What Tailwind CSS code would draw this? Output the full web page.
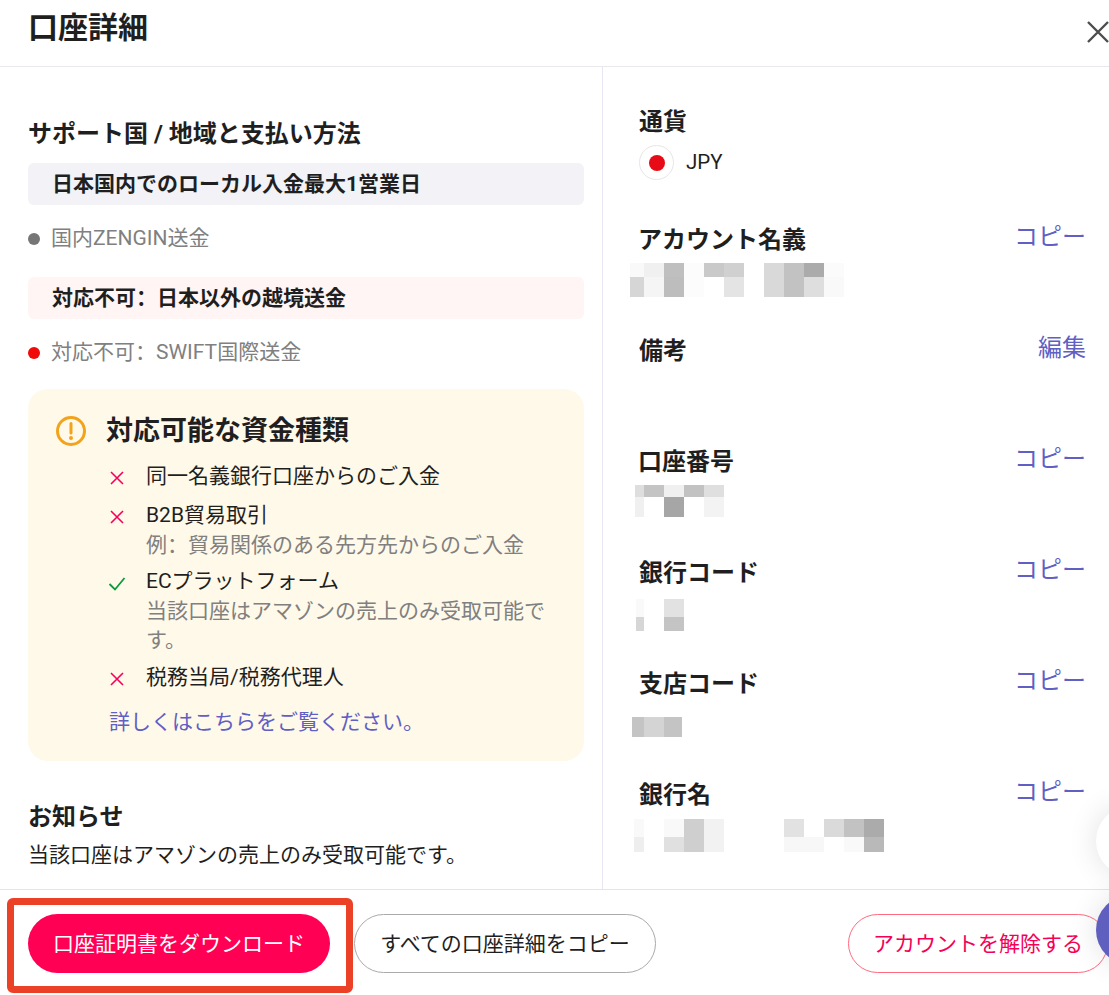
<!DOCTYPE html>
<html lang="ja">
<head>
    <meta charset="UTF-8">
    <meta name="viewport" content="width=device-width, initial-scale=1.0">
    <title>口座詳細</title>
    <script src="https://cdn.jsdelivr.net/npm/@tailwindcss/browser@4"></script>
</head>
<body class="bg-white text-[#1f1f1f] font-['Roboto','Noto_Sans_CJK_JP',sans-serif] text-[21px]">

    <div class="relative w-[1109px] h-[995px] overflow-hidden flex flex-col">

        <!-- ヘッダー -->
        <div class="relative h-[67px] shrink-0 border-b border-[#e8e8ee] pl-[28px]">
            <h1 class="text-[30px] leading-[56px] font-bold">口座詳細</h1>
            <svg class="absolute left-[1086px] top-[20px] w-[24px] h-[24px]" viewBox="0 0 24 24" fill="none" stroke="#4d4d4d" stroke-width="2.4"><path d="M2 2 L22 22 M22 2 L2 22"/></svg>
        </div>

        <div class="flex h-[822px] shrink-0 overflow-hidden">

            <!-- 左カラム -->
            <div class="w-[603px] shrink-0 border-r border-[#e6e6f5] pl-[28px] pr-[18px] pt-[50px]">
                <h2 class="text-[24px] leading-[34px] font-bold">サポート国 / 地域と支払い方法</h2>

                <div class="mt-[12px] h-[42px] rounded-md bg-[#f2f2f7] pl-[24px] leading-[42px] font-bold">日本国内でのローカル入金最大1営業日</div>
                <div class="mt-[19px] h-[30px] flex items-center text-[#808080]">
                    <span class="w-[12px] h-[12px] rounded-full bg-[#767676] mr-[12px]"></span>
                    <span class="-ml-px">国内ZENGIN送金</span>
                </div>

                <div class="mt-[23px] h-[42px] rounded-md bg-[#fff5f5] pl-[24px] leading-[42px] font-bold">対応不可<span lang="zh-CN">：</span>日本以外の越境送金</div>
                <div class="mt-[19px] h-[30px] flex items-center text-[#808080]">
                    <span class="w-[12px] h-[12px] rounded-full bg-[#f00a0a] mr-[12px]"></span>
                    <span class="-ml-px">対応不可<span lang="zh-CN">：</span>SWIFT国際送金</span>
                </div>

                <div class="mt-[21px] h-[372px] rounded-[20px] bg-[#fff9e9] pt-[22px] pl-[28px]">
                    <div class="flex items-center h-[40px]">
                        <svg class="w-[30px] h-[32px] mr-[20px]" viewBox="0 0 30 32" fill="none"><circle cx="15" cy="16" r="13.5" stroke="#f2a31b" stroke-width="3"/><path d="M15 8.5 V18" stroke="#f2a31b" stroke-width="3" stroke-linecap="round"/><circle cx="15" cy="23" r="2" fill="#f2a31b"/></svg>
                        <h3 class="text-[27px] leading-[40px] font-bold">対応可能な資金種類</h3>
                    </div>

                    <ul class="mt-[11px] leading-[29.5px]">
                        <li class="flex">
                            <svg class="w-[16px] h-[30px] ml-[53px] mr-[21px] shrink-0" viewBox="0 0 16 30" fill="none" stroke="#f5005a" stroke-width="1.6"><path d="M2 10 L14 22 M14 10 L2 22"/></svg>
                            <span>同一名義銀行口座からのご入金</span>
                        </li>
                        <li class="flex mt-[9px]">
                            <svg class="w-[16px] h-[30px] ml-[53px] mr-[21px] shrink-0" viewBox="0 0 16 30" fill="none" stroke="#f5005a" stroke-width="1.6"><path d="M2 10 L14 22 M14 10 L2 22"/></svg>
                            <div>
                                <div>B2B貿易取引</div>
                                <div class="text-[#808080]">例<span lang="zh-CN">：</span>貿易関係のある先方先からのご入金</div>
                            </div>
                        </li>
                        <li class="flex mt-[7px]">
                            <svg class="w-[18px] h-[30px] ml-[52px] mr-[20px] shrink-0" viewBox="0 0 18 30" fill="none" stroke="#0a9b3c" stroke-width="1.8"><path d="M1.5 17 L7 22.5 L16.5 11"/></svg>
                            <div class="w-[410px]">
                                <div>ECプラットフォーム</div>
                                <div class="text-[#808080]">当該口座はアマゾンの売上のみ受取可能です。</div>
                            </div>
                        </li>
                        <li class="flex mt-[7px]">
                            <svg class="w-[16px] h-[30px] ml-[53px] mr-[21px] shrink-0" viewBox="0 0 16 30" fill="none" stroke="#f5005a" stroke-width="1.6"><path d="M2 10 L14 22 M14 10 L2 22"/></svg>
                            <span>税務当局/税務代理人</span>
                        </li>
                    </ul>
                    <a class="block mt-[14px] ml-[53px] leading-[30px] text-[#5f5fc4]">詳しくはこちらをご覧ください。</a>
                </div>

                <h2 class="mt-[39px] text-[24px] leading-[34px] font-bold">お知らせ</h2>
                <p class="mt-[6px] leading-[30px]">当該口座はアマゾンの売上のみ受取可能です。</p>
            </div>

            <!-- 右カラム -->
            <div class="flex-1 pl-[36px] pr-[23px] pt-[38px]">
                <h2 class="text-[24px] leading-[34px] font-bold">通貨</h2>
                <div class="mt-[6px] h-[35px] flex items-center">
                    <span class="w-[35px] h-[35px] rounded-full border border-[#e6e6e6] flex items-center justify-center mr-[12px]">
                        <span class="w-[16px] h-[16px] rounded-full bg-[#e60b17]"></span>
                    </span>
                    <span class="text-[20.5px]">JPY</span>
                </div>

                <div class="mt-[43px] flex justify-between items-center h-[34px]">
                    <h2 class="text-[24px] leading-[34px] font-bold -ml-px">アカウント名義</h2>
                    <a class="text-[24px] leading-[34px] text-[#5f5fc4] mb-[6px]">コピー</a>
                </div>
                <svg class="mt-[6px] -ml-[9px] block" width="220" height="34" viewBox="630 263 220 34">
                    <rect x="630" y="263" width="14" height="14" fill="#f9f9f9"/><rect x="644" y="263" width="20" height="14" fill="#f0f0f0"/><rect x="664" y="263" width="20" height="14" fill="#bfbfbf"/><rect x="684" y="263" width="20" height="14" fill="#fcfcfc"/><rect x="704" y="263" width="20" height="14" fill="#c9c9c9"/><rect x="724" y="263" width="20" height="14" fill="#d0d0d0"/>
                    <rect x="764" y="263" width="20" height="14" fill="#d9d9d9"/><rect x="784" y="263" width="20" height="14" fill="#c2c2c2"/><rect x="804" y="263" width="20" height="14" fill="#ababab"/><rect x="824" y="263" width="20" height="14" fill="#fbfbfb"/>
                    <rect x="630" y="277" width="14" height="20" fill="#d6d6d6"/><rect x="644" y="277" width="20" height="20" fill="#f5f5f5"/><rect x="664" y="277" width="20" height="20" fill="#bdbdbd"/><rect x="684" y="277" width="20" height="20" fill="#fcfcfc"/><rect x="724" y="277" width="20" height="20" fill="#e4e4e4"/>
                    <rect x="764" y="277" width="20" height="20" fill="#d9d9d9"/><rect x="784" y="277" width="20" height="20" fill="#c2c2c2"/><rect x="804" y="277" width="20" height="20" fill="#dedede"/><rect x="824" y="277" width="20" height="20" fill="#f9f9f9"/>
                </svg>

                <div class="mt-[37px] flex justify-between items-center h-[34px]">
                    <h2 class="text-[24px] leading-[34px] font-bold">備考</h2>
                    <a class="text-[24px] leading-[34px] text-[#5f5fc4] mb-[6px]">編集</a>
                </div>

                <div class="mt-[77px] flex justify-between items-center h-[34px]">
                    <h2 class="text-[24px] leading-[34px] font-bold -ml-px">口座番号</h2>
                    <a class="text-[24px] leading-[34px] text-[#5f5fc4] mb-[6px]">コピー</a>
                </div>
                <svg class="mt-[6px] -ml-[4px] block" width="90" height="32" viewBox="635 485 90 32">
                    <rect x="635" y="485" width="9" height="12" fill="#dedede"/><rect x="644" y="485" width="20" height="12" fill="#c4c4c4"/><rect x="664" y="485" width="20" height="12" fill="#f0f0f0"/><rect x="684" y="485" width="20" height="12" fill="#c2c2c2"/><rect x="704" y="485" width="20" height="12" fill="#dfdfdf"/>
                    <rect x="635" y="497" width="9" height="20" fill="#f0f0f0"/><rect x="664" y="497" width="20" height="20" fill="#a6a6a6"/><rect x="704" y="497" width="20" height="20" fill="#f3f3f3"/>
                </svg>

                <div class="mt-[39px] flex justify-between items-center h-[34px]">
                    <h2 class="text-[24px] leading-[34px] font-bold">銀行コード</h2>
                    <a class="text-[24px] leading-[34px] text-[#5f5fc4] mb-[6px]">コピー</a>
                </div>
                <svg class="mt-[9px] -ml-[3px] block" width="48" height="32" viewBox="636 599 48 32">
                    <rect x="636" y="599" width="8" height="18" fill="#f9f9f9"/><rect x="664" y="599" width="20" height="18" fill="#e2e2e2"/>
                    <rect x="636" y="617" width="8" height="14" fill="#d6d6d6"/><rect x="664" y="617" width="20" height="14" fill="#c4c4c4"/>
                </svg>

                <div class="mt-[36px] flex justify-between items-center h-[34px]">
                    <h2 class="text-[24px] leading-[34px] font-bold">支店コード</h2>
                    <a class="text-[24px] leading-[34px] text-[#5f5fc4] mb-[6px]">コピー</a>
                </div>
                <svg class="mt-[16px] -ml-[7px] block" width="50" height="20" viewBox="632 717 50 20">
                    <rect x="632" y="717" width="12" height="20" fill="#c4c4c4"/><rect x="644" y="717" width="20" height="20" fill="#d4d4d4"/><rect x="664" y="717" width="18" height="20" fill="#c4c4c4"/>
                </svg>

                <div class="mt-[41px] flex justify-between items-center h-[34px]">
                    <h2 class="text-[24px] leading-[34px] font-bold">銀行名</h2>
                    <a class="text-[24px] leading-[34px] text-[#5f5fc4] mb-[6px]">コピー</a>
                </div>
                <svg class="mt-[7px] -ml-[5px] block" width="250" height="33" viewBox="634 819 250 33">
                    <rect x="634" y="819" width="10" height="18" fill="#f9f9f9"/><rect x="664" y="819" width="20" height="18" fill="#f9f9f9"/><rect x="684" y="819" width="20" height="18" fill="#cfcfcf"/><rect x="704" y="819" width="20" height="18" fill="#f2f2f2"/>
                    <rect x="784" y="819" width="20" height="18" fill="#e2e2e2"/><rect x="824" y="819" width="20" height="18" fill="#dadada"/><rect x="844" y="819" width="20" height="18" fill="#c2c2c2"/><rect x="864" y="819" width="20" height="18" fill="#ababab"/>
                    <rect x="634" y="837" width="10" height="15" fill="#eeeeee"/><rect x="664" y="837" width="20" height="15" fill="#e0e0e0"/><rect x="684" y="837" width="20" height="15" fill="#cfcfcf"/><rect x="704" y="837" width="20" height="15" fill="#f2f2f2"/>
                    <rect x="784" y="837" width="20" height="15" fill="#f7f7f7"/><rect x="804" y="837" width="20" height="15" fill="#f7f7f7"/><rect x="844" y="837" width="20" height="15" fill="#f9f9f9"/><rect x="864" y="837" width="20" height="15" fill="#b9b9b9"/>
                </svg>
            </div>
        </div>

        <!-- フッター -->
        <div class="flex-1 border-t border-[#e5e5e5] pt-[24px] pl-[28px] flex items-start">
            <button class="w-[302px] h-[59px] rounded-full bg-[#ff0055] text-white text-[21px] pt-[2px]">口座証明書をダウンロード</button>
            <button class="ml-[24px] w-[302px] h-[59px] rounded-full border border-[#aaaaaa] text-[21px] pt-[2px]">すべての口座詳細をコピー</button>
            <button class="ml-[192px] w-[260px] h-[59px] rounded-full border border-[#ff6a80] text-[#f50057] text-[21px] pt-[2px]">アカウントを解除する</button>
        </div>

        <!-- 注釈の赤枠 -->
        <div class="absolute left-[7px] top-[898px] w-[346px] h-[95px] border-[7px] border-[#ea4127] rounded-[6px]"></div>

        <!-- 右端のフローティングボタン -->
        <div class="absolute left-[1096px] top-[806px] w-[70px] h-[70px] rounded-full bg-white shadow-[0_0_30px_rgba(0,0,0,0.12)]"></div>
        <div class="absolute left-[1096px] top-[895px] w-[70px] h-[70px] rounded-full bg-[#5f5fc0] shadow-[0_0_30px_rgba(0,0,0,0.12)]"></div>
    </div>

</body>
</html>
